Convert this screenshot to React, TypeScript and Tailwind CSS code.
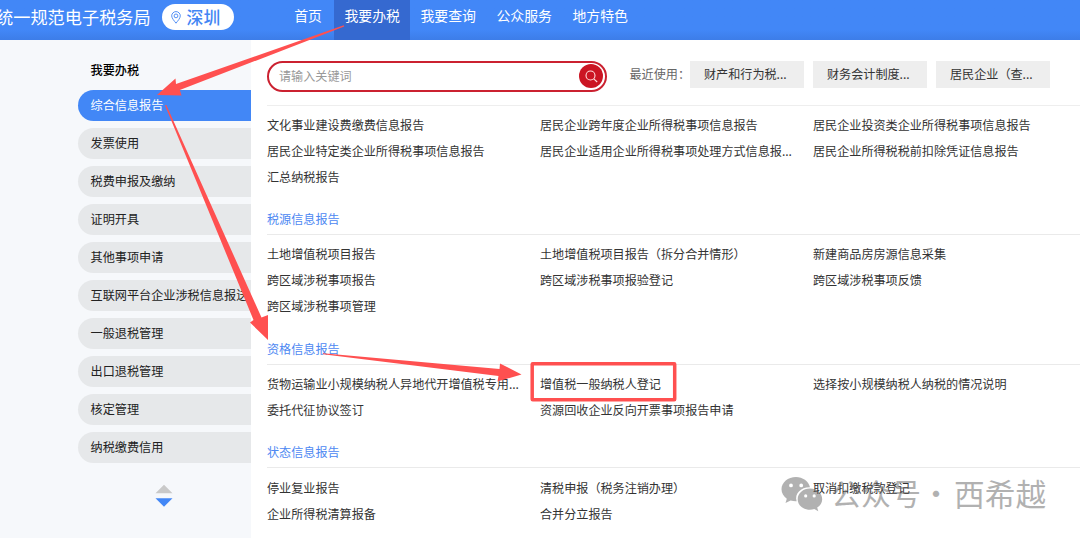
import React from 'react';

const navItems = ['首页', '我要办税', '我要查询', '公众服务', '地方特色'];

const menuItems = [
  '综合信息报告',
  '发票使用',
  '税费申报及缴纳',
  '证明开具',
  '其他事项申请',
  '互联网平台企业涉税信息报送',
  '一般退税管理',
  '出口退税管理',
  '核定管理',
  '纳税缴费信用',
];

const recentItems = ['财产和行为税...', '财务会计制度...', '居民企业（查...'];

interface Section {
  title?: string;
  rows: string[][];
}

const sections: Section[] = [
  {
    rows: [
      ['文化事业建设费缴费信息报告', '居民企业跨年度企业所得税事项信息报告', '居民企业投资类企业所得税事项信息报告'],
      ['居民企业特定类企业所得税事项信息报告', '居民企业适用企业所得税事项处理方式信息报...', '居民企业所得税税前扣除凭证信息报告'],
      ['汇总纳税报告'],
    ],
  },
  {
    title: '税源信息报告',
    rows: [
      ['土地增值税项目报告', '土地增值税项目报告（拆分合并情形）', '新建商品房房源信息采集'],
      ['跨区域涉税事项报告', '跨区域涉税事项报验登记', '跨区域涉税事项反馈'],
      ['跨区域涉税事项管理'],
    ],
  },
  {
    title: '资格信息报告',
    rows: [
      ['货物运输业小规模纳税人异地代开增值税专用...', '增值税一般纳税人登记', '选择按小规模纳税人纳税的情况说明'],
      ['委托代征协议签订', '资源回收企业反向开票事项报告申请'],
    ],
  },
  {
    title: '状态信息报告',
    rows: [
      ['停业复业报告', '清税申报（税务注销办理）', '取消扣缴税款登记'],
      ['企业所得税清算报备', '合并分立报告'],
    ],
  },
];

const Header = () => (
  <header className="flex h-10 shrink-0 items-start bg-linear-to-b from-[#4287f7] from-75% to-[#3d7de8] text-white">
    <div className="-ml-[4px] w-[165.6px] shrink-0 whitespace-nowrap text-[17.2px] leading-[33px]">统一规范电子税务局</div>
    <div className="mt-1 flex h-[26px] w-[72.5px] shrink-0 items-center rounded-full bg-white pl-[9px] text-[#4285f4]">
      <svg className="mr-[6px] h-[13px] w-[10px]" viewBox="0 0 10 13" fill="none" stroke="currentColor" strokeWidth="0.9">
        <path d="M5 12.2C3.4 10 .7 7.3.7 4.9a4.3 4.3 0 0 1 8.6 0C9.3 7.3 6.6 10 5 12.2Z" />
        <circle cx="5" cy="4.9" r="1.9" />
      </svg>
      <span className="-mt-px text-[16.8px] font-medium leading-[26px]">深圳</span>
    </div>
    <nav className="ml-[48.1px] flex h-full text-[13.9px] leading-[31px]">
      {navItems.map((item) => (
        <a
          key={item}
          className={
            item === '我要办税'
              ? 'h-full w-[76px] bg-[#3569d0] text-center'
              : item === '首页'
                ? 'h-full w-[52px] pl-3'
                : 'h-full w-[76px] text-center'
          }
        >
          {item}
        </a>
      ))}
    </nav>
  </header>
);

const Sidebar = () => (
  <aside className="w-[250.5px] shrink-0 bg-[#f6f8fb] pl-[78px] pt-[15px] text-[12.15px] text-[#222]">
    <h2 className="mb-[5px] h-[30px] pl-[12.5px] font-medium leading-[30px] text-black">我要办税</h2>
    <ul className="space-y-[7px]">
      {menuItems.map((item, i) => (
        <li
          key={item}
          className={
            i === 0
              ? 'h-[31px] whitespace-nowrap rounded-l-full bg-[#4287f6] pl-[12.5px] leading-[30px] text-white'
              : 'h-[31px] whitespace-nowrap rounded-l-full bg-[#e6e8ea] pl-[12.5px] leading-[30px]'
          }
        >
          {item}
        </li>
      ))}
    </ul>
    <svg className="ml-[77px] mt-[21px] h-[24px] w-[18px]" viewBox="0 0 18 24">
      <path d="M9 .8 17.5 9.3H.5Z" fill="#c9c9c9" />
      <path d="M.5 14.3h17L9 22.8Z" fill="#4287f6" />
    </svg>
  </aside>
);

const SearchBar = () => (
  <div className="flex h-[65.5px] items-start border-b border-[#eee] pt-[20.5px]">
    <div className="flex h-[31px] w-[340px] shrink-0 items-center justify-between rounded-full border-2 border-[#cb2130] pl-[10px] pr-[2px] text-[12.1px] text-[#999]">
      <span>请输入关键词</span>
      <span className="flex h-6 w-6 items-center justify-center rounded-full bg-[#cb1523]">
        <svg className="h-[13px] w-[13px]" viewBox="0 0 13 13" fill="none" stroke="#ffdcdc" strokeWidth="1.1">
          <circle cx="5.5" cy="5.5" r="4.5" />
          <path d="m8.8 8.8 3.4 3.2" />
        </svg>
      </span>
    </div>
    <span className="ml-[22.5px] w-[60.5px] shrink-0 whitespace-nowrap text-[12.1px] leading-[25px] text-[#666]">最近使用：</span>
    <div className="flex gap-[9px]">
      {recentItems.map((item) => (
        <span key={item} className="h-[27px] w-[114px] whitespace-nowrap bg-[#eee] pl-[14px] text-[12.1px] leading-[26px] text-[#333]">
          {item}
        </span>
      ))}
    </div>
  </div>
);

const SectionBlock = ({ title, rows }: Section) => (
  <section className="mb-[14.3px]">
    {title && <h3 className="h-[30px] text-[12.1px] leading-[30px] text-[#4d88f2]">{title}</h3>}
    <div className={title ? 'border-t border-[#eaeaea] pt-[6.3px]' : 'pt-[6.4px]'}>
      {rows.map((row) => (
        <div key={row[0]} className="grid h-[26px] grid-cols-[273px_273px_1fr] text-[12.1px] leading-[26px] text-[#333]">
          {row.map((cell) => (
            <a key={cell} className="whitespace-nowrap">{cell}</a>
          ))}
        </div>
      ))}
    </div>
  </section>
);

// red guide arrows leading from the nav to the highlighted entry
const Annotations = () => (
  <svg className="pointer-events-none absolute inset-0 h-[538px] w-[1080px]" viewBox="0 0 1080 538" fill="#ff5050">
    <path d="M343.8 25.2 176 84 175.5 78.5 157 95 181.5 95.5 179.8 90 344.2 26.6Z" />
    <path d="M165 105.3 253.5 320 250 322.5 268 340 268 315 261.5 317.5 166.3 105Z" />
    <path d="M323 354.3 498.5 376 497.5 381.5 521.5 374.5 500 363.5 499.5 369 323 353.2Z" />
    <rect x="532.2" y="363.8" width="142.5" height="36" rx="0.5" fill="none" stroke="#ff5050" strokeWidth="3.5" />
  </svg>
);

const Watermark = () => (
  <div className="pointer-events-none absolute left-[781px] top-[473px] flex whitespace-nowrap text-[#666] opacity-50">
    <svg className="mt-[3px] h-[36px] w-[42px] shrink-0" viewBox="0 0 42 36" fill="#666">
      <path
        fillRule="evenodd"
        d="M15 1C7 1 .5 6.5.5 13.3c0 3.9 2.1 7.2 5.3 9.5L4.5 27l5.1-2.6c2 .6 3.9.9 6 .8C13.3 17.5 20 11 29 11.2 27.5 5.2 21.7 1 15 1ZM10 7.5a1.9 1.9 0 1 1 0 3.8 1.9 1.9 0 0 1 0-3.8Zm10.2 0a1.9 1.9 0 1 1 0 3.8 1.9 1.9 0 0 1 0-3.8Z"
      />
      <path
        fillRule="evenodd"
        d="M29 12.5c-6.9 0-12.3 4.8-12.3 10.7S22.1 33.8 29 33.8c1.5 0 3-.3 4.3-.7l4 2.2-1.1-3.7c3.1-2 5-5 5-8.4 0-5.9-5.3-10.7-12.2-10.7Zm-4.3 5.8a1.6 1.6 0 1 1 0 3.2 1.6 1.6 0 0 1 0-3.2Zm8.5 0a1.6 1.6 0 1 1 0 3.2 1.6 1.6 0 0 1 0-3.2Z"
      />
    </svg>
    <span className="ml-[8px] w-[90px] text-[30px] leading-[39px]">公众号</span>
    <span className="w-[33px] text-[30px] leading-[39px]">·</span>
    <span className="text-[30.7px] leading-[39px]">西希越</span>
  </div>
);

const App = () => {
  return (
    <div className="relative flex h-[538px] w-[1080px] flex-col overflow-hidden bg-white font-['Noto_Sans_CJK_SC',sans-serif]">
      <Header />
      <div className="flex flex-1">
        <Sidebar />
        <main className="min-w-0 flex-1 pl-[16.5px]">
          <SearchBar />
          {sections.map((section, i) => (
            <SectionBlock key={i} {...section} />
          ))}
        </main>
      </div>
      <Annotations />
      <Watermark />
    </div>
  );
};

export default App;
